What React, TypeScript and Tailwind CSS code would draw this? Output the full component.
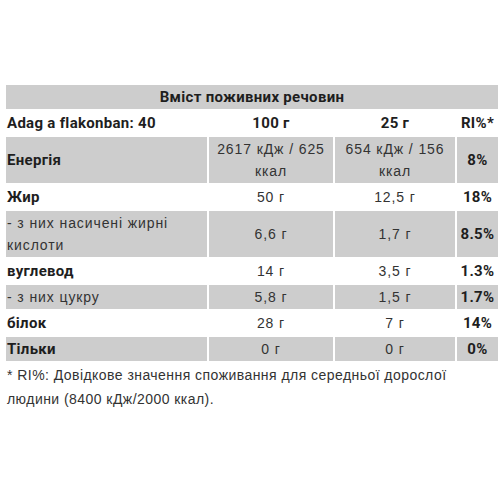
import React from "react";

type Row = {
  name: string;
  per100: string;
  per25: string;
  ri: string;
  shaded: boolean;
  sub?: boolean;
};

const rows: Row[] = [
  { name: "Енергія", per100: "2617 кДж / 625 ккал", per25: "654 кДж / 156 ккал", ri: "8%", shaded: true },
  { name: "Жир", per100: "50 г", per25: "12,5 г", ri: "18%", shaded: false },
  { name: "- з них насичені жирні кислоти", per100: "6,6 г", per25: "1,7 г", ri: "8.5%", shaded: true, sub: true },
  { name: "вуглевод", per100: "14 г", per25: "3,5 г", ri: "1.3%", shaded: false },
  { name: "- з них цукру", per100: "5,8 г", per25: "1,5 г", ri: "1.7%", shaded: true, sub: true },
  { name: "білок", per100: "28 г", per25: "7 г", ri: "14%", shaded: false },
  { name: "Тільки", per100: "0 г", per25: "0 г", ri: "0%", shaded: true },
];

const bold = "font-['Roboto',sans-serif] font-bold text-[15px] tracking-[0.3px] text-[#1e1e1e]";
const plain = "font-['Liberation_Sans',Arial,sans-serif] text-[14px] tracking-[0.9px] text-[#333]";

export default function App() {
  return (
    <div className="w-[500px] h-[500px] overflow-hidden bg-white pt-[83px] pl-1">
      <table className="table-fixed border-separate border-spacing-[2px] w-[496px] leading-[22px]">
        <colgroup>
          <col className="w-[201px]" />
          <col className="w-[124px]" />
          <col className="w-[120px]" />
          <col className="w-[41px]" />
        </colgroup>
        <tbody>
          <tr>
            <td colSpan={4} className={`${bold} bg-[#cdcdcd] text-center py-px`}>
              Вміст поживних речовин
            </td>
          </tr>
          <tr>
            <td className={`${bold} py-px pl-px`}>Adag a flakonban: 40</td>
            <td className={`${bold} py-px text-center`}>100 г</td>
            <td className={`${bold} py-px text-center`}>25 г</td>
            <td className={`${bold} py-px text-center whitespace-nowrap`}>RI%*</td>
          </tr>
          {rows.map((r) => {
            const bg = r.shaded ? "bg-[#cdcdcd]" : "";
            return (
              <tr key={r.name}>
                <td className={`${r.sub ? plain : bold} ${bg} py-px pl-px`}>{r.name}</td>
                <td className={`${plain} ${bg} py-px text-center`}>{r.per100}</td>
                <td className={`${plain} ${bg} py-px text-center`}>{r.per25}</td>
                <td className={`${bold} ${bg} py-px text-center whitespace-nowrap`}>{r.ri}</td>
              </tr>
            );
          })}
        </tbody>
      </table>
      <p className="font-['Liberation_Sans',Arial,sans-serif] text-[14px] leading-[24px] tracking-[0.45px] text-[#333] pl-[3px] pr-6">
        * RI%: Довідкове значення споживання для середньої дорослої людини (8400 кДж/2000 ккал).
      </p>
    </div>
  );
}
